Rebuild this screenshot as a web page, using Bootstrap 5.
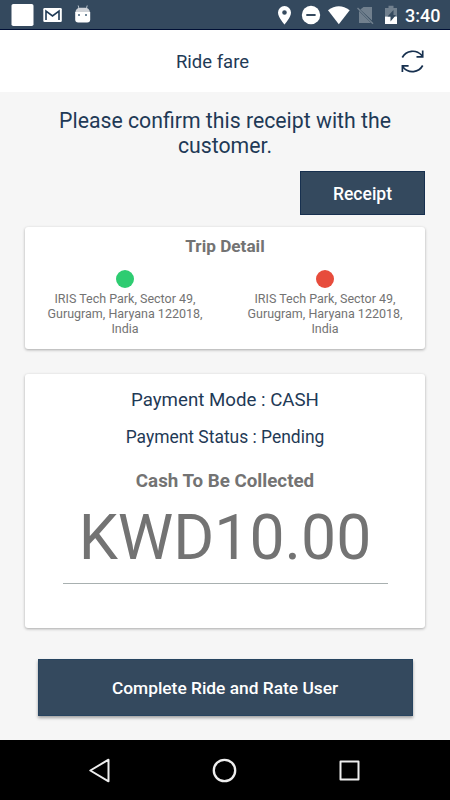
<!DOCTYPE html>
<html lang="en">
<head>
<meta charset="utf-8">
<meta name="viewport" content="width=device-width, initial-scale=1">
<title>Ride fare</title>
<link href="https://cdn.jsdelivr.net/npm/bootstrap@5.3.0/dist/css/bootstrap.min.css" rel="stylesheet">
<style>
  body { font-family: Roboto, "Liberation Sans", sans-serif; background: #f6f6f6; color: #1f3a56; width: 450px; height: 800px; }
  svg { display: block; flex: none; }
  .statusbar { height: 30px; background: #34495e; border-bottom: 1px solid #000f35; }
  .clock { width: 47px; padding-left: 2px; font-size: 18px; line-height: 31px; font-weight: 500; }
  .appbar { height: 62px; }
  .appbar h1 { font-size: 18.5px; line-height: 22px; padding: 2px 25px 0 0; }
  .refresh { right: 25px; }
  .screen { padding: 16px 25px 0; }
  .lead-in { font-size: 21.25px; line-height: 25px; width: 350px; }
  .action { --bs-btn-color: #fff; --bs-btn-bg: #34495e; --bs-btn-border-color: #17304f; --bs-btn-hover-bg: #2c3e50; --bs-btn-hover-color: #fff; --bs-btn-border-radius: 0; --bs-btn-font-size: 17.5px; --bs-btn-font-weight: 500; }
  .receipt { width: 125px; height: 44px; margin-top: 13px; padding: 2px 0 0; }
  .complete { --bs-btn-font-size: 17.35px; --bs-btn-border-color: #274460; width: 375px; height: 57px; margin-top: 31px; padding: 2px 0 0; box-shadow: 0 2px 3px rgba(0,0,0,.35); }
  .panel { --bs-card-border-width: 0; --bs-card-border-radius: 3px; box-shadow: 0 1px 3px rgba(0,0,0,.32); text-align: center; }
  .trip { height: 122px; margin-top: 12px; padding-top: 9px; }
  .trip h2 { font-size: 17.2px; line-height: 21px; font-weight: 700; color: #737373; margin: 0; }
  .stops { margin-top: 13px; }
  .dot { width: 18px; height: 18px; margin-bottom: 3px; }
  .start { background: #2ecc71; }
  .end { background: #e74c3c; }
  .stops p { font-size: 12.5px; line-height: 15px; width: 170px; color: #737373; }
  .pay { height: 254px; margin-top: 25px; padding: 15px 37.5px 0; }
  .mode { font-size: 18.7px; line-height: 22px; }
  .state { font-size: 17.45px; line-height: 21px; margin-top: 16px; }
  .pay h2 { font-size: 18.75px; line-height: 22px; font-weight: 700; color: #737373; margin: 22px 0 0; }
  .amount { font-size: 62.5px; line-height: 73px; color: #737373; margin-top: 9px; height: 83px; border-bottom: 1px solid #a8b0b0; }
  .navkeys { height: 60px; gap: 100px; padding-right: 1px; }
</style>
</head>
<body class="d-flex flex-column overflow-hidden">
<header>
  <div class="statusbar d-flex text-white">
    <svg width="100" height="29" viewBox="0 0 100 29">
      <rect x="11.500" y="4" width="22" height="22" rx="1.800" fill="#fff"/>
      <rect x="43.300" y="8" width="18.500" height="14" rx="1.300" fill="#fff"/>
      <path d="M46 20v-9l6.500 5 6.500-5v9" fill="none" stroke="#1f3a56" stroke-width="1.600"/>
      <path d="M78.200 5.500l1 4M87.200 5.500l-1 4" stroke="#b8c3cd" stroke-width="1"/>
      <path d="M75.300 12.500q.5-4.700 5-4.700h4.700q4.500 0 5 4.700z" fill="#d0d3d8"/>
      <path d="M75.200 12h15v7.500q0 3-3 3h-9q-3 0-3-3z" fill="#fff"/>
      <path d="M78 14h2v2h-2zM85 14h2v2h-2z" fill="#74899b"/>
    </svg>
    <svg class="ms-auto" width="129" height="29" viewBox="274 0 129 29">
      <path d="M284.500 6a6.500 6.500 0 0 0-6.500 6.500c0 4.800 6.500 12 6.500 12s6.500-7.200 6.500-12a6.500 6.500 0 0 0-6.500-6.500zm0 4.200a2.300 2.300 0 1 1 0 4.600 2.300 2.300 0 0 1 0-4.600z" fill="#fff" fill-rule="evenodd"/>
      <circle cx="311" cy="15" r="9.200" fill="#fff"/>
      <path d="M306.300 15h9.300" stroke="#34495e" stroke-width="2"/>
      <path d="M328 10.200q10.800-8 21.700 0L338.800 24.300z" fill="#fff"/>
      <path d="M363.500 7h8.500v13.500L360.300 9.500zM359 11v12h12z" fill="#71808e"/>
      <path d="M357.500 8l15.500 15.700" stroke="#71808e" stroke-width="1.400"/>
      <path d="M385 8h3.500V5.800h5V8h3.500v8.500h-12z" fill="#71808e"/>
      <path d="M385 16.500h12V24h-12z" fill="#fff"/>
      <path d="M393.500 10l-6 6.500h3v5l5.500-6.500h-2.500z" fill="#34495e"/>
    </svg>
    <span class="clock">3:40</span>
  </div>
  <div class="appbar bg-white d-grid align-items-center position-relative">
    <h1 class="m-0 text-center fw-normal">Ride fare</h1>
    <svg class="refresh position-absolute" width="25" height="26" viewBox="400 48 25 26" fill="none" stroke="#17304f" stroke-width="1.700">
      <path d="M402.300 57.500a11.800 11.800 0 0 1 19.300-2.200l1 1.200M422.700 50.500v6.300h-6.200M422.700 65.500a11.800 11.800 0 0 1-19.300 2l-.8-1.200M402.400 72v-6.100h6.200"/>
    </svg>
  </div>
</header>
<main class="screen flex-grow-1 d-flex flex-column">
  <p class="lead-in text-center align-self-center m-0">Please confirm this receipt with the customer.</p>
  <button class="btn action receipt align-self-end" type="button">Receipt</button>
  <section class="card panel trip">
    <h2>Trip Detail</h2>
    <div class="row g-0 stops">
      <div class="col-6 d-flex flex-column align-items-center">
        <span class="dot start rounded-circle"></span>
        <p class="m-0">IRIS Tech Park, Sector 49, Gurugram, Haryana 122018, India</p>
      </div>
      <div class="col-6 d-flex flex-column align-items-center">
        <span class="dot end rounded-circle"></span>
        <p class="m-0">IRIS Tech Park, Sector 49, Gurugram, Haryana 122018, India</p>
      </div>
    </div>
  </section>
  <section class="card panel pay">
    <div class="mode">Payment Mode : CASH</div>
    <div class="state">Payment Status : Pending</div>
    <h2>Cash To Be Collected</h2>
    <div class="amount">KWD10.00</div>
  </section>
  <button class="btn action complete align-self-center" type="button">Complete Ride and Rate User</button>
</main>
<footer class="navkeys bg-black d-flex justify-content-center align-items-center">
  <svg width="25" height="25" viewBox="0 0 25 25" fill="none" stroke="#eee" stroke-width="2" stroke-linejoin="round"><path d="M21.500 1.700v21.600L3.300 12.500z"/></svg>
  <svg width="25" height="25" viewBox="0 0 25 25" fill="none" stroke="#eee" stroke-width="2.300"><circle cx="12.500" cy="12.500" r="10.700"/></svg>
  <svg width="25" height="25" viewBox="0 0 25 25" fill="none" stroke="#eee" stroke-width="2" stroke-linejoin="round"><rect x="3.500" y="3.500" width="18" height="18"/></svg>
</footer>
<script src="https://cdn.jsdelivr.net/npm/bootstrap@5.3.0/dist/js/bootstrap.bundle.min.js"></script>
</body>
</html>
